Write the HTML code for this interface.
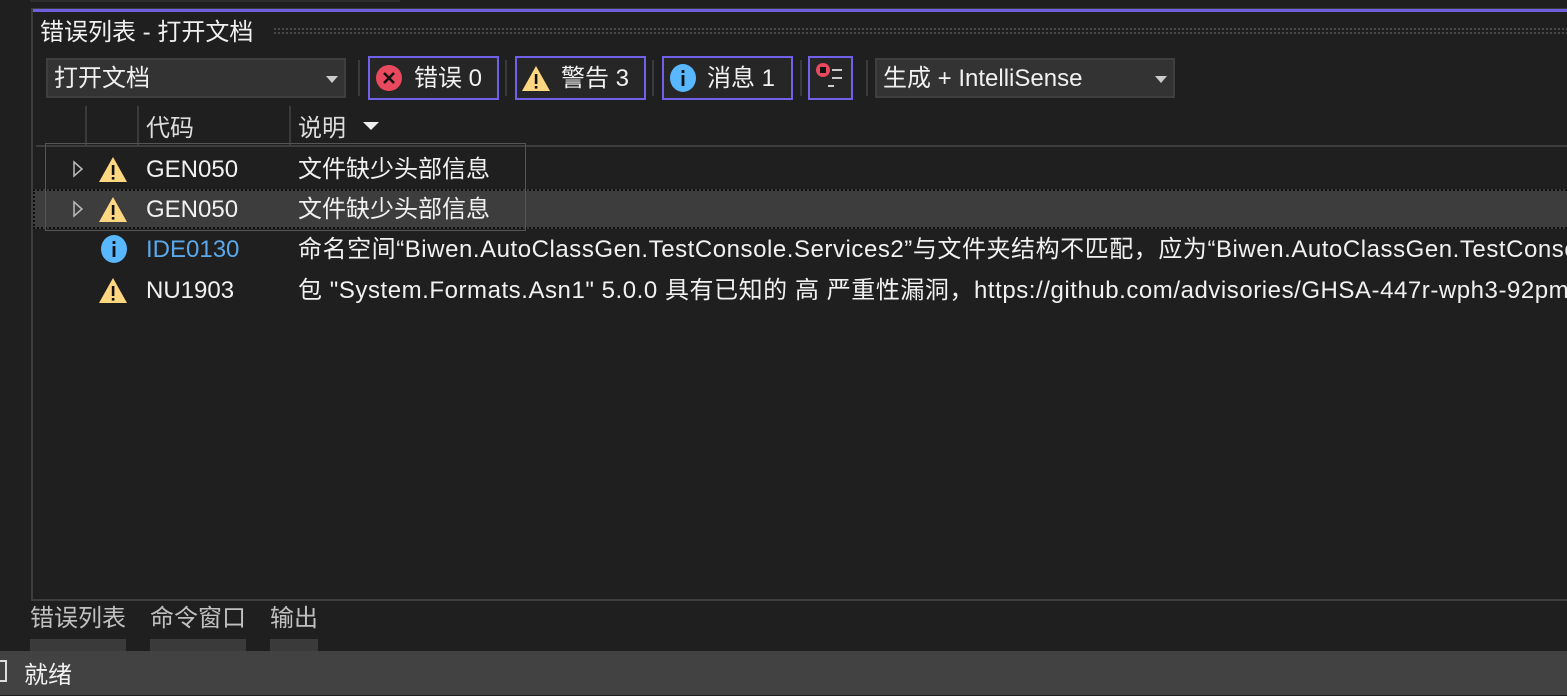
<!DOCTYPE html>
<html><head><meta charset="utf-8"><style>
*{margin:0;padding:0;box-sizing:border-box}
body{width:1567px;height:695px;background:#1f1f1f;position:relative;overflow:hidden;font-family:"Liberation Sans","Noto Sans CJK SC",sans-serif;color:#f1f1f1;font-size:24px}
.a{position:absolute;white-space:nowrap}
.t{line-height:40px}
.ls{letter-spacing:0.55px}
.btn{position:absolute;top:56px;height:44px;border:2px solid #7160e8;background:#262626}
.sep{position:absolute;top:60px;width:2px;height:36px;background:#3a3a3a}
.dd{position:absolute;top:58px;height:40px;background:#333;border:2px solid #3f3f3f}
.tri{position:absolute;width:0;height:0;border-left:6px solid transparent;border-right:6px solid transparent;border-top:7px solid #ccc}
</style></head><body>
<div class="a" style="left:30px;top:0;width:370px;height:2px;background:#2d2d2d"></div>
<div class="a" style="left:31px;top:8px;width:1536px;height:593px;border-left:2px solid #3d3d3d;border-bottom:2px solid #3d3d3d;border-top:2px solid #3d3d3d"></div>
<div class="a" style="left:33px;top:9px;width:1534px;height:3px;background:#6f5fe0"></div>
<div class="a t" style="left:40px;top:13px">错误列表 - 打开文档</div>
<div class="a" style="left:273px;top:27px;width:1294px;height:7px;background-image:radial-gradient(#555 0.8px,transparent 1px);background-size:4px 4px"></div>

<div class="dd" style="left:46px;width:300px"></div>
<div class="a t" style="left:54px;top:59px">打开文档</div>
<div class="tri" style="left:326px;top:76px"></div>
<div class="sep" style="left:358px"></div>
<div class="btn" style="left:368px;width:131px"></div>
<svg class="a" style="left:376px;top:65px" width="26" height="26"><circle cx="13" cy="13" r="13" fill="#e8495c"/><path d="M8 8L18 18M18 8L8 18" stroke="#111" stroke-width="2.5"/></svg>
<div class="a t" style="left:414px;top:59px">错误 0</div>
<div class="sep" style="left:505px"></div>
<div class="btn" style="left:515px;width:131px"></div>
<svg class="a" style="left:521px;top:64px" width="30" height="28"><path d="M15 2L29 27H1Z" fill="#ffd780"/><rect x="13.8" y="10" width="2.6" height="10" fill="#111"/><rect x="13.8" y="22" width="2.6" height="2.6" fill="#111"/></svg>
<div class="a t" style="left:561px;top:59px">警告 3</div>
<div class="sep" style="left:652px"></div>
<div class="btn" style="left:662px;width:131px"></div>
<svg class="a" style="left:669px;top:64px" width="28" height="28"><ellipse cx="14" cy="14" rx="13" ry="14" fill="#58b7ff"/><rect x="12.6" y="11" width="2.8" height="11" fill="#111"/><rect x="12.6" y="6" width="2.8" height="3" fill="#111"/></svg>
<div class="a t" style="left:707px;top:59px">消息 1</div>
<div class="sep" style="left:800px"></div>
<div class="btn" style="left:808px;width:45px"></div>
<svg class="a" style="left:813px;top:61px" width="36" height="34"><circle cx="10" cy="9" r="7" fill="#e8495c"/><rect x="7" y="6" width="6" height="6" fill="#111"/><rect x="19" y="8" width="10" height="2" fill="#ccc"/><rect x="19" y="16" width="10" height="2" fill="#ccc"/><rect x="15" y="24" width="6" height="2" fill="#ccc"/></svg>
<div class="sep" style="left:866px"></div>
<div class="dd" style="left:875px;width:300px"></div>
<div class="a t" style="left:883px;top:59px">生成 + IntelliSense</div>
<div class="tri" style="left:1155px;top:76px"></div>

<div class="a" style="left:85px;top:106px;width:2px;height:40px;background:#3a3a3a"></div>
<div class="a" style="left:137px;top:106px;width:2px;height:40px;background:#3a3a3a"></div>
<div class="a" style="left:289px;top:106px;width:2px;height:40px;background:#3a3a3a"></div>
<div class="a t" style="left:146px;top:109px;color:#ddd">代码</div>
<div class="a t" style="left:298px;top:109px;color:#ddd">说明</div>
<div class="tri" style="left:363px;top:122px;border-left-width:8px;border-right-width:8px;border-top-width:8px;border-top-color:#eee"></div>
<div class="a" style="left:36px;top:145px;width:1531px;height:2px;background:#3d3d3d"></div>

<div class="a" style="left:33px;top:189px;width:1534px;height:40px;background:#3d3d3d;border-top:2px dotted #111;border-bottom:2px dotted #111;border-left:2px dotted #111"></div>
<div class="a" style="left:45px;top:143px;width:481px;height:88px;border:1px solid #555"></div>

<svg class="a" style="left:72px;top:160px" width="12" height="18"><path d="M2 2L10 9L2 16Z" fill="none" stroke="#bbb" stroke-width="1.5"/></svg>
<svg class="a" style="left:98px;top:155px" width="30" height="28"><path d="M15 2L29 27H1Z" fill="#ffd780"/><rect x="13.8" y="10" width="2.6" height="10" fill="#111"/><rect x="13.8" y="22" width="2.6" height="2.6" fill="#111"/></svg>
<div class="a t" style="left:146px;top:150px">GEN050</div>
<div class="a t" style="left:298px;top:150px">文件缺少头部信息</div>

<svg class="a" style="left:72px;top:200px" width="12" height="18"><path d="M2 2L10 9L2 16Z" fill="none" stroke="#bbb" stroke-width="1.5"/></svg>
<svg class="a" style="left:98px;top:195px" width="30" height="28"><path d="M15 2L29 27H1Z" fill="#ffd780"/><rect x="13.8" y="10" width="2.6" height="10" fill="#111"/><rect x="13.8" y="22" width="2.6" height="2.6" fill="#111"/></svg>
<div class="a t" style="left:146px;top:190px">GEN050</div>
<div class="a t" style="left:298px;top:190px">文件缺少头部信息</div>

<svg class="a" style="left:100px;top:235px" width="28" height="28"><ellipse cx="14" cy="14" rx="13" ry="14" fill="#58b7ff"/><rect x="12.6" y="11" width="2.8" height="11" fill="#111"/><rect x="12.6" y="6" width="2.8" height="3" fill="#111"/></svg>
<div class="a t" style="left:146px;top:230px;color:#5ba7e8">IDE0130</div>
<div class="a t ls" style="left:298px;top:230px">命名空间“Biwen.AutoClassGen.TestConsole.Services2”与文件夹结构不匹配，应为“Biwen.AutoClassGen.TestConsole</div>

<svg class="a" style="left:98px;top:276px" width="30" height="28"><path d="M15 2L29 27H1Z" fill="#ffd780"/><rect x="13.8" y="10" width="2.6" height="10" fill="#111"/><rect x="13.8" y="22" width="2.6" height="2.6" fill="#111"/></svg>
<div class="a t" style="left:146px;top:271px">NU1903</div>
<div class="a t ls" style="left:298px;top:271px">包 "System.Formats.Asn1" 5.0.0 具有已知的 高 严重性漏洞，https://github.com/advisories/GHSA-447r-wph3-92pm</div>

<div class="a t" style="left:30px;top:599px;color:#c0c0c0">错误列表</div>
<div class="a t" style="left:150px;top:599px;color:#c0c0c0">命令窗口</div>
<div class="a t" style="left:270px;top:599px;color:#c0c0c0">输出</div>
<div class="a" style="left:30px;top:639px;width:96px;height:12px;background:#3a3a3a"></div>
<div class="a" style="left:150px;top:639px;width:96px;height:12px;background:#3a3a3a"></div>
<div class="a" style="left:270px;top:639px;width:48px;height:12px;background:#3a3a3a"></div>
<div class="a" style="left:0;top:651px;width:1567px;height:44px;background:#424242"></div>
<div class="a" style="left:-4px;top:660px;width:11px;height:22px;border:2px solid #ddd"></div>
<div class="a t" style="left:24px;top:656px">就绪</div>
</body></html>
